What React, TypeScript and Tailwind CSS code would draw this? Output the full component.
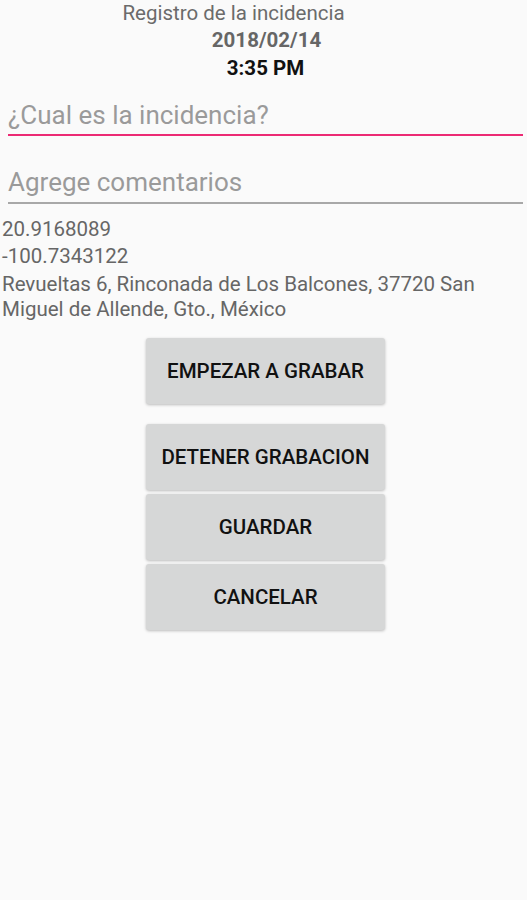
const buttons = ["EMPEZAR A GRABAR", "DETENER GRABACION", "GUARDAR", "CANCELAR"];

export default function App() {
  return (
    <div className="min-h-[900px] w-[527px] bg-[#fafafa] font-['Roboto',sans-serif]">
      {/* Header */}
      <div className="flex flex-col items-center pt-[1px]">
        <div className="mr-[60px] text-[20.5px] leading-[24px] text-[#6b6b6b]">Registro de la incidencia</div>
        <div className="ml-[6px] text-[20.5px] font-bold leading-[30px] text-[#666]">2018/02/14</div>
        <div className="ml-[4px] text-[20.5px] font-bold leading-[26px] text-[#111]">3:35 PM</div>
      </div>

      {/* Inputs */}
      <div className="pl-[8px] pr-[4px] pt-[19px]">
        <div className="border-b-2 border-[#ec2a74] pb-[3px]">
          <input
            placeholder="¿Cual es la incidencia?"
            className="w-full bg-transparent text-[26px] leading-[30px] text-[#333] outline-none placeholder:text-[#9a9a9a]"
          />
        </div>
        <div className="mt-[31px] border-b-2 border-[#a8a8a8] pb-[4px]">
          <input
            placeholder="Agrege comentarios"
            className="w-full bg-transparent text-[26px] leading-[30px] text-[#333] outline-none placeholder:text-[#9a9a9a]"
          />
        </div>
      </div>

      {/* Location */}
      <div className="mt-[12px] pl-[2px] text-[20.5px] leading-[27px] text-[#666]">
        <div>20.9168089</div>
        <div>-100.7343122</div>
        <div className="mt-[2px] leading-[25px]">
          Revueltas 6, Rinconada de Los Balcones, 37720 San
          <br />
          Miguel de Allende, Gto., México
        </div>
      </div>

      {/* Buttons */}
      <div className="ml-[4px] mt-[16px] flex flex-col items-center">
        {buttons.map((b, i) => (
          <button
            key={b}
            className={`h-[66px] w-[239px] rounded-[3px] bg-[#d6d7d7] text-[20.5px] font-medium text-[#111] shadow-[0_1px_3px_rgba(0,0,0,0.25)] ${
              i === 0 ? "mb-[20px]" : "mb-[4px]"
            }`}
          >
            {b}
          </button>
        ))}
      </div>
    </div>
  );
}
